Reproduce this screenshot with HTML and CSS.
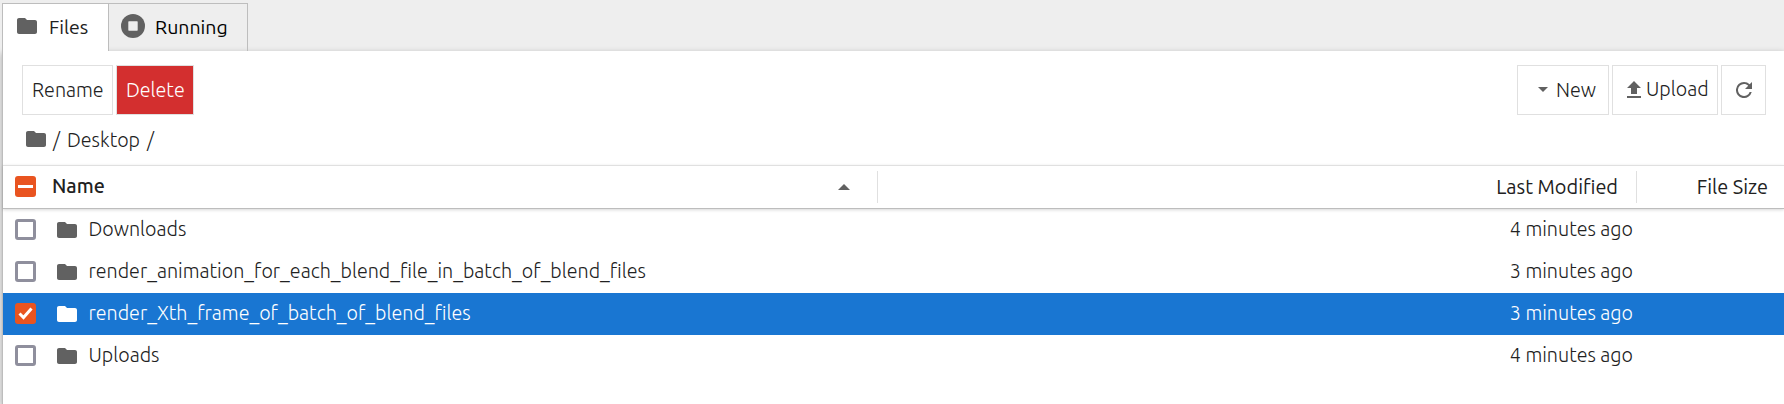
FILE: index.html
```html
<!DOCTYPE html>
<html lang="en">
<head>
<meta charset="utf-8">
<title>Files</title>
<link rel="stylesheet" href="styles.css">
</head>
<body>
<svg class="defs" width="0" height="0">
  <symbol id="folder" viewBox="2 4 20 16"><path d="M10 4H4c-1.1 0-2 .9-2 2v12c0 1.100.9 2 2 2h16c1.100 0 2-.9 2-2V8c0-1.100-.9-2-2-2h-8z"/></symbol>
</svg>
<div class="browser">
  <nav class="tabs">
    <div class="tab active"><svg class="folder"><use href="#folder"/></svg><span class="t-files">Files</span></div>
    <div class="tab"><svg class="stop" viewBox="0 0 24 24"><circle cx="12" cy="12" r="12"/><rect x="7.300" y="7.300" width="9.400" height="9.400" rx=".6" fill="#eee"/></svg><span class="t-running">Running</span></div>
  </nav>
  <main class="panel">
    <div class="toolbar">
      <button class="btn rename"><span class="t-rename">Rename</span></button>
      <button class="btn delete"><span class="t-delete">Delete</span></button>
      <span class="spacer"></span>
      <button class="btn new"><svg class="caret" viewBox="0 0 10 5"><path d="M0 0h10L5 5z"/></svg><span class="t-new">New</span></button>
      <button class="btn upload"><svg class="up" viewBox="0 0 14 17"><path d="M4 13V7H0l7-7 7 7h-4v6zM0 15h14v2H0z"/></svg><span class="t-upload">Upload</span></button>
      <button class="btn refresh"><svg class="reload" viewBox="4 4 16 16"><path d="M17.650 6.350A7.958 7.958 0 0 0 12 4a8 8 0 1 0 7.730 10h-2.080A6 6 0 1 1 12 6c1.660 0 3.140.69 4.220 1.780L13 11h7V4z"/></svg></button>
    </div>
    <div class="crumbs"><svg class="folder"><use href="#folder"/></svg><span>/</span><span>Desktop</span><span>/</span></div>
    <div class="row head">
      <div class="cell name"><span class="check on"><i class="dash"></i></span><span class="t-name">Name</span><svg class="sort" viewBox="0 0 12 6"><path d="M0 6h12L6 0z"/></svg></div>
      <div class="cell modified"><span class="t-modified">Last Modified</span></div>
      <div class="cell size"><span class="t-size">File Size</span></div>
    </div>
    <div class="row">
      <div class="cell name"><span class="check"></span><svg class="folder"><use href="#folder"/></svg><span class="label">Downloads</span></div>
      <div class="cell modified"><span class="label">4 minutes ago</span></div>
    </div>
    <div class="row">
      <div class="cell name"><span class="check"></span><svg class="folder"><use href="#folder"/></svg><span class="label">render_animation_for_each_blend_file_in_batch_of_blend_files</span></div>
      <div class="cell modified"><span class="label">3 minutes ago</span></div>
    </div>
    <div class="row selected">
      <div class="cell name"><span class="check on"><svg class="tick" viewBox="0 0 15 13"><path d="M1.500 6.500L5.500 10.500 13.500 1.500"/></svg></span><svg class="folder"><use href="#folder"/></svg><span class="label">render_Xth_frame_of_batch_of_blend_files</span></div>
      <div class="cell modified"><span class="label">3 minutes ago</span></div>
    </div>
    <div class="row">
      <div class="cell name"><span class="check"></span><svg class="folder"><use href="#folder"/></svg><span class="label">Uploads</span></div>
      <div class="cell modified"><span class="label">4 minutes ago</span></div>
    </div>
  </main>
</div>
</body>
</html>
```
FILE: styles.css
```css
* { box-sizing: border-box; }
body { margin: 0; background: #eee; color: #212121; font: 300 19.7px/24px Ubuntu, "Noto Sans", sans-serif; overflow: hidden; }
svg { display: block; flex: none; fill: #616161; }
.defs { display: none; }
span { white-space: nowrap; }
.browser { height: 404px; padding: 3px 0 0 2px; display: flex; flex-direction: column; }
.tabs { display: flex; height: 48px; position: relative; z-index: 1; }
.tab { display: flex; align-items: center; height: 48px; border: 1px solid #bdbdbd; border-left: 0; border-bottom: 0; color: #000; width: 139px; padding: 0 0 1px 12px; gap: 10px; font-weight: 400; font-size: 19.5px; }
.tab.active { width: 107px; background: #fff; color: #212121; border-left: 1px solid #bdbdbd; padding: 0 0 1px 14px; gap: 12px; }
.tab svg { margin-bottom: 2px; }
.folder { width: 20px; height: 16px; }
.stop { width: 24px; height: 24px; }
.panel { flex: 1; background: #fff; border-left: 1px solid #bdbdbd; box-shadow: 0 2px 6px rgba(0,0,0,.3); }
.toolbar { display: flex; gap: 3px; padding: 14px 18px 0 19px; }
.spacer { flex: 1; }
.btn { height: 50px; border: 1px solid #e0e0e0; background: #fff; color: inherit; font: inherit; padding: 0 0 1px; display: flex; align-items: center; justify-content: flex-start; }
.rename { width: 91px; padding-left: 9px; }
.delete { width: 78px; padding-left: 9px; background: #d32f2f; color: #fff; }
.new { width: 92px; padding-left: 20px; gap: 8px; padding-bottom: 0; }
.upload { width: 106px; padding-left: 14px; gap: 5px; padding-bottom: 2px; }
.refresh { width: 45px; justify-content: center; padding-bottom: 0; }
.caret { width: 10px; height: 5px; margin-top: -1px; }
.up { width: 14px; height: 17px; margin-top: 1px; }
.reload { width: 16px; height: 16px; }
.crumbs { display: flex; align-items: center; gap: 7px; height: 50px; padding: 0 0 2px 23px; }
.crumbs span { padding-top: 1px; }
.row { display: grid; grid-template-columns: 875px 759px 1fr; height: 42px; padding-bottom: 1px; }
.cell { display: flex; align-items: center; }
.cell.name { padding-left: 12px; }
.cell.name .folder { margin: 0 11.5px 0 21px; }
.label { padding-bottom: 1px; }
.modified { justify-content: flex-end; padding-right: 4px; }
.head { height: 44px; padding: 0; border-top: 1px solid #e0e0e0; border-bottom: 1px solid #bdbdbd; box-shadow: 0 1px 3px rgba(0,0,0,.16); font-weight: 400; }
.head .cell { height: 32px; margin-top: 5px; padding-bottom: 1px; }
.head .name, .head .modified { border-right: 1px solid #e0e0e0; }
.head .modified { padding-right: 18px; }
.size { justify-content: flex-end; padding-right: 16px; }
.t-modified, .t-size { font-size: 19.9px; padding-top: 1px; }
.sort { width: 12px; height: 6px; margin-left: auto; margin-right: 27px; }
.check { flex: none; width: 21px; height: 21px; border: 3px solid #8f8f9d; border-radius: 3px; background: #fff; display: flex; align-items: center; justify-content: center; }
.check.on { border: 0; background: #e95420; }
.dash { width: 15px; height: 3px; background: #fff; }
.tick { width: 15px; height: 13px; fill: none; stroke: #fff; stroke-width: 3; }
.selected { background: #1976d2; color: #fff; }
.selected .folder { fill: #fff; }
.t-name { font-weight: 500; margin-left: 16px; padding-bottom: 1px; }
```
